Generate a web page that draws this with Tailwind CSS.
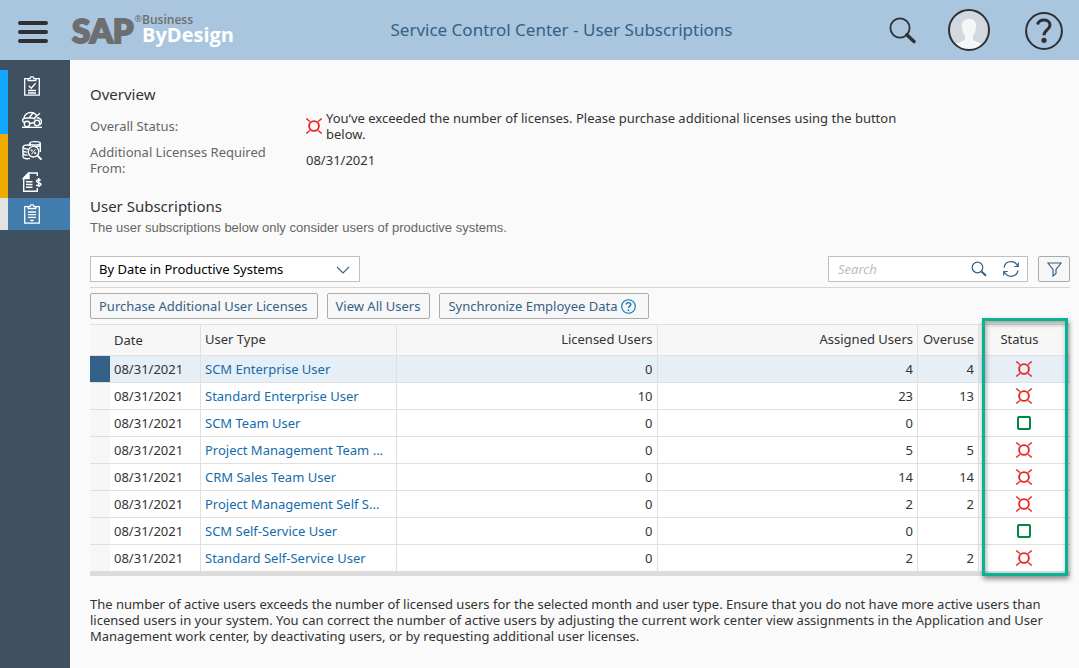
<!DOCTYPE html>
<html lang="en">
<head>
<meta charset="utf-8">
<meta name="viewport" content="width=device-width, initial-scale=1">
<title>Service Control Center - User Subscriptions</title>
<script src="https://cdn.jsdelivr.net/npm/@tailwindcss/browser@4"></script>
</head>
<body class="flex min-h-screen flex-col bg-[#fafafa] font-['Noto_Sans',sans-serif] text-[13px] leading-4 text-[#333333]">
<svg class="hidden" aria-hidden="true">
  <symbol id="alert" viewBox="0 0 16 16"><circle cx="8" cy="8" r="4.900" fill="none" stroke="#e52929" stroke-width="1.900"/><path d="M.3.500L3.800 3.600M15.700.500L12.200 3.600M.3 15.500L3.800 12.400M15.700 15.500L12.200 12.400" fill="none" stroke="#e52929" stroke-width="1.400"/></symbol>
  <symbol id="ok" viewBox="0 0 16 16"><rect x="2" y="2" width="12" height="12" rx="1" fill="none" stroke="#00883f" stroke-width="2"/></symbol>
</svg>

<header class="flex h-[60px] items-center justify-between bg-[#a9c6de] pr-4 pl-[18px]">
  <div class="flex items-center gap-6">
    <button type="button" aria-label="Menu" class="mt-1 block">
      <svg class="h-6 w-[30px]" viewBox="0 0 30 24" fill="none" stroke="#2f3033" stroke-width="4" stroke-linecap="round"><path d="M2 3h26M2 12h26M2 21h26"/></svg>
    </button>
    <div class="flex items-start text-[#6d6e70]">
      <span class="font-[Lato,sans-serif] text-[33px] leading-8 font-black [-webkit-text-stroke:2px_#6d6e70]">SAP</span>
      <span class="pl-px text-[9px] leading-[10px]">®</span>
      <span class="flex flex-col font-['Open_Sans',sans-serif]">
        <span class="text-[12px] leading-[11px] font-semibold">Business</span>
        <span class="text-[20px] leading-5 font-bold text-white">ByDesign</span>
      </span>
    </div>
  </div>
  <h1 class="text-[17px] leading-6 text-[#346187]">Service Control Center - User Subscriptions</h1>
  <div class="flex items-center">
    <button type="button" aria-label="Search" class="mr-8"><svg class="h-[27px] w-[27px]" viewBox="0 0 27 27" fill="none" stroke="#2f3033"><circle cx="11" cy="11" r="9.600" stroke-width="1.800"/><path d="M17.800 17.800L25 24.600" stroke-width="3.400" stroke-linecap="round"/></svg></button>
    <button type="button" aria-label="Profile" class="mr-[35px]"><svg class="h-[42px] w-[42px]" viewBox="0 0 42 42"><clipPath id="face"><circle cx="21" cy="21" r="20"/></clipPath><circle cx="21" cy="21" r="20" fill="#d1d8df"/><path clip-path="url(#face)" fill="#f4f6f8" d="M21 10c-5 0-7.500 3-7 7.500 0 4 1 7 3 9v4c-1 2-8 3-11 6v6h30v-6c-3-3-10-4-11-6v-4c2-2 3-5 3-9 .5-4.500-2-7.500-7-7.500z"/><circle cx="21" cy="21" r="20" fill="none" stroke="#2f3033" stroke-width="2"/></svg></button>
    <button type="button" aria-label="Help" class="mt-[2px]"><svg class="h-[38px] w-[38px]" viewBox="0 0 38 38" fill="none" stroke="#2f3033"><circle cx="19" cy="19" r="17.900" stroke-width="2"/><path d="M12.500 12.500c1-3.500 3.700-4.500 6.500-4.500s6 1.500 6 5c0 5-6 4.700-6 10.200" stroke-width="3"/><circle cx="19" cy="28.300" r="2.600" fill="#2f3033" stroke="none"/></svg></button>
  </div>
</header>

<div class="flex flex-1">
  <nav aria-label="Work centers" class="flex w-[70px] shrink-0 flex-col bg-[#3f5161] pt-[10px]">
    <a href="#" aria-label="Tasks" class="flex h-8 items-center border-l-8 border-[#12a8ff] pl-[14px]">
      <svg class="h-5 w-5" viewBox="0 0 20 20" fill="none" stroke="#fff" stroke-width="1.300"><path d="M6.500 2.700H2.700v16.500h14.600V2.700h-3.800"/><path d="M6.200 4.500V2.800l2-.6c.3-2 3.300-2 3.600 0l2 .6v1.700z"/><path d="M6.800 9.800l2.400 2.400 4.400-5M6 14.500h8M6 17h8"/></svg>
    </a>
    <a href="#" aria-label="Travel" class="flex h-8 items-center border-l-8 border-[#12a8ff] pl-[14px]">
      <svg class="h-5 w-5" viewBox="0 0 20 20" fill="none" stroke="#fff" stroke-width="1.400"><path d="M1.800 10C3 6 5.500 4.500 9 4.500c3 0 5.500 2 6.500 5.200 2.500.5 4 2 4 4.300 0 1.200-.7 2-1.700 2.500M2.500 14.500c-1.800-.5-2.200-1.800-1.700-3C1.300 10.300 3 10 5 10h5.500M11 5L7 10M12.500 9.700l5.500-4.500M7.700 15.500l4.800-1M10.500 10l3 1"/><circle cx="5" cy="16" r="2.700"/><circle cx="15" cy="15" r="2.700"/><path d="M0 19.300h20"/></svg>
    </a>
    <a href="#" aria-label="Cost analysis" class="flex h-8 items-center border-l-8 border-[#f0ab00] pl-[14px]">
      <svg class="h-5 w-5" viewBox="0 0 20 20" fill="none" stroke="#fff" stroke-width="1.400"><ellipse cx="13" cy="3.300" rx="5.300" ry="1.700"/><path d="M18.300 3.300V12M7.700 3.500v1.700M9 5.700c-3-1.200-8-.7-8 1.500v9.500c0 1.700 4 2.600 7 1.700M1 7.500c1 1.300 3 1.700 5 1.500M1 10.700c1 1 2.300 1.400 4 1.400M1 13.700c1 1 2.500 1.500 4.500 1.500M10 6c3 .7 6 .5 8.300-.5"/><circle cx="11.500" cy="11.700" r="5.300"/><path d="M15.500 15.700l4 4" stroke-width="1.900"/><path d="M13.500 9.200l-4 5" stroke-width="1"/><circle cx="9.700" cy="10.400" r=".8" stroke-width="1"/><circle cx="13.200" cy="13.100" r=".8" stroke-width="1"/></svg>
    </a>
    <a href="#" aria-label="Invoices" class="flex h-8 items-center border-l-8 border-[#f0ab00] pl-[14px]">
      <svg class="h-5 w-5" viewBox="0 0 20 20" fill="none" stroke="#fff" stroke-width="1.400"><path d="M15.300 4V1H6.500L1.700 6v13.200h13.600V16"/><path d="M7 1v5.500H1.500z" fill="#fff"/><path d="M4 9.700h6.500M4 12.500h6.500M4 15.300h6.500"/><path d="M18.700 8.400c-1.200-1.200-4.200-1-4.200.8 0 2 4.500 1 4.500 3 0 1.900-3.400 2-4.700.7M16.700 6v9" stroke-width="1.500"/></svg>
    </a>
    <a href="#" aria-label="User subscriptions" aria-current="page" class="flex h-8 items-center border-l-8 border-[#e3e3e3] bg-[#427cac] pl-[14px]">
      <svg class="h-5 w-5" viewBox="0 0 20 20" fill="none" stroke="#fff" stroke-width="1.300"><path d="M6.500 2.700H2.700v16.500h14.600V2.700h-3.800"/><path d="M6.200 4.500V2.800l2-.6c.3-2 3.300-2 3.600 0l2 .6v1.700z"/><path d="M6 8h8M6 10.700h8M6 13.400h8"/><path d="M8 16h4l-2 1.400z" fill="#fff" stroke-width=".6"/></svg>
    </a>
  </nav>

  <main class="min-w-0 flex-1 pt-[23px] pr-[9px] pb-6 pl-5">
    <h2 class="text-[15px] leading-[22px]">Overview</h2>
    <dl class="mt-[5px] grid max-w-[820px] grid-cols-[216px_1fr] items-center gap-y-[2px]">
      <dt class="max-w-[200px] text-[#666666]">Overall Status:</dt>
      <dd class="flex items-center gap-1"><svg class="h-4 w-4 shrink-0" role="img" aria-label="Exceeded"><use href="#alert"/></svg><span>You‘ve exceeded the number of licenses. Please purchase additional licenses using the button below.</span></dd>
      <dt class="max-w-[200px] text-[#666666]">Additional Licenses Required From:</dt>
      <dd>08/31/2021</dd>
    </dl>

    <h2 class="mt-[19px] text-[15px] leading-[22px]">User Subscriptions</h2>
    <p class="mt-[3px] font-['Liberation_Sans',sans-serif] text-[#666666]">The user subscriptions below only consider users of productive systems.</p>

    <div class="mt-5 flex items-center justify-between border-b border-[#d6d6d6] pb-[5px]">
      <div class="relative w-[270px]">
        <select aria-label="View" class="h-[26px] w-full appearance-none border border-[#bfbfbf] bg-white pr-8 pl-2 text-black"><option>By Date in Productive Systems</option></select>
        <svg class="pointer-events-none absolute top-[10px] right-[10px] h-2 w-[14px]" viewBox="0 0 14 8" fill="none" stroke="#346187" stroke-width="1.100"><path d="M1 1l6 6 6-6"/></svg>
      </div>
      <div class="flex gap-[10px]">
        <div class="flex h-[26px] w-[200px] items-center border border-[#bfbfbf] bg-white pr-2">
          <input type="search" aria-label="Search" placeholder="Search" class="min-w-0 flex-1 pl-[9px] placeholder:text-[#bdbdbd] placeholder:italic">
          <button type="button" aria-label="Find" class="mr-4"><svg class="h-4 w-4" viewBox="0 0 16 16" fill="none" stroke="#346187"><circle cx="6.500" cy="6.500" r="5.300" stroke-width="1.200"/><path d="M10.500 10.500l4.500 4.300" stroke-width="2"/></svg></button>
          <button type="button" aria-label="Refresh"><svg class="h-4 w-4" viewBox="0 0 16 16" fill="none" stroke="#346187" stroke-width="1.200"><path d="M1 6.500C1.800 2.800 4.500.7 8 .7c3 0 5.300 1.500 6.600 4.300M15 9.500c-.8 3.700-3.500 5.800-7 5.800-3 0-5.300-1.500-6.600-4.300M15.300 1.500v4h-4M.7 14.500v-4h4"/></svg></button>
        </div>
        <button type="button" aria-label="Filter" class="flex h-[26px] w-8 items-center justify-center rounded-xs border border-[#ababab] bg-[#f7f7f7]"><svg class="h-[15px] w-[15px]" viewBox="0 0 15 15" fill="none" stroke="#346187" stroke-width="1.200"><path d="M.9 1h13.200L9 7.500v4L6 14V7.500z"/></svg></button>
      </div>
    </div>

    <div class="mt-[5px] flex gap-[9px] text-[#346187]">
      <button type="button" class="h-[26px] rounded-xs border border-[#ababab] bg-[#f7f7f7] pr-[9px] pl-2">Purchase Additional User Licenses</button>
      <button type="button" class="h-[26px] rounded-xs border border-[#ababab] bg-[#f7f7f7] pr-[9px] pl-2">View All Users</button>
      <button type="button" class="flex h-[26px] items-center gap-1 rounded-xs border border-[#ababab] bg-[#f7f7f7] pr-3 pl-2">Synchronize Employee Data
        <svg class="h-[15px] w-[15px]" viewBox="0 0 15 15" fill="none" stroke="#0a72bd"><circle cx="7.500" cy="7.500" r="6.800" stroke-width="1.100"/><path d="M5.200 5.500c0-2.500 4.600-2.500 4.600 0 0 1.700-2.300 1.700-2.300 3.600" stroke-width="1.400"/><circle cx="7.500" cy="11.200" r=".9" fill="#0a72bd" stroke="none"/></svg>
      </button>
    </div>

    <div class="relative mt-[5px]">
      <table class="w-full table-fixed border-separate border-spacing-0 border-t border-b-[5px] border-t-[#e0e0e0] border-b-[#dcdcdc] bg-white [&_tbody_tr]:h-[27px] [&_tbody_tr:last-child]:h-[26px] [&_td]:border-b [&_td]:border-[#e0e0e0] [&_tr:last-child_td]:border-b-0 [&_thead_th]:border-b! [&_th]:border-[#e0e0e0] [&_th]:font-normal">
        <colgroup><col class="w-5"><col class="w-[91px]"><col class="w-[196px]"><col><col><col class="w-[61px]"><col class="w-[91px]"></colgroup>
        <thead class="bg-[#f7f7f7]">
          <tr class="h-[31px]">
            <th></th>
            <th scope="col" class="border-r pl-1 text-left">Date</th>
            <th scope="col" class="border-r pb-[2px] pl-1 text-left">User Type</th>
            <th scope="col" class="border-r pr-1 pb-[2px] text-right">Licensed Users</th>
            <th scope="col" class="border-r pr-1 pb-[2px] text-right">Assigned Users</th>
            <th scope="col" class="border-r pr-1 pb-[2px] text-right">Overuse</th>
            <th scope="col" class="pr-[10px] pb-[2px] text-center">Status</th>
          </tr>
        </thead>
        <tbody id="rows">
        </tbody>
      </table>
      <div class="pointer-events-none absolute -top-[6px] right-[2px] bottom-0 w-[86px] border-3 border-[#0ab291] shadow-[1px_3px_5px_rgba(0,0,0,0.45),inset_1px_3px_5px_rgba(0,0,0,0.35)]"></div>
    </div>

    <p class="mt-5">The number of active users exceeds the number of licensed users for the selected month and user type. Ensure that you do not have more active users than licensed users in your system. You can correct the number of active users by adjusting the current work center view assignments in the Application and User Management work center, by deactivating users, or by requesting additional user licenses.</p>
  </main>
</div>

<script>
const data = [
  ['SCM Enterprise User', 0, 4, 4],
  ['Standard Enterprise User', 10, 23, 13],
  ['SCM Team User', 0, 0, ''],
  ['Project Management Team ...', 0, 5, 5],
  ['CRM Sales Team User', 0, 14, 14],
  ['Project Management Self S...', 0, 2, 2],
  ['SCM Self-Service User', 0, 0, ''],
  ['Standard Self-Service User', 0, 2, 2],
];
document.getElementById('rows').innerHTML = data.map(([name, licensed, assigned, over], i) => `
  <tr class="${i === 0 ? 'bg-[#e6eef6]' : 'bg-white'}">
    <td class="${i === 0 ? 'bg-[#346187]' : 'bg-[#f7f7f7]'}"></td>
    <td class="border-r pl-1">08/31/2021</td>
    <td class="border-r pl-1 whitespace-nowrap"><a href="#" class="text-[#146cab]">${name}</a></td>
    <td class="border-r pr-1 text-right">${licensed}</td>
    <td class="border-r pr-1 text-right">${assigned}</td>
    <td class="border-r pr-1 text-right">${over}</td>
    <td class="pr-[2px]"><svg class="mx-auto block h-4 w-4" role="img" aria-label="${over === '' ? 'OK' : 'Exceeded'}"><use href="${over === '' ? '#ok' : '#alert'}"/></svg></td>
  </tr>`).join('');
</script>
</body>
</html>
